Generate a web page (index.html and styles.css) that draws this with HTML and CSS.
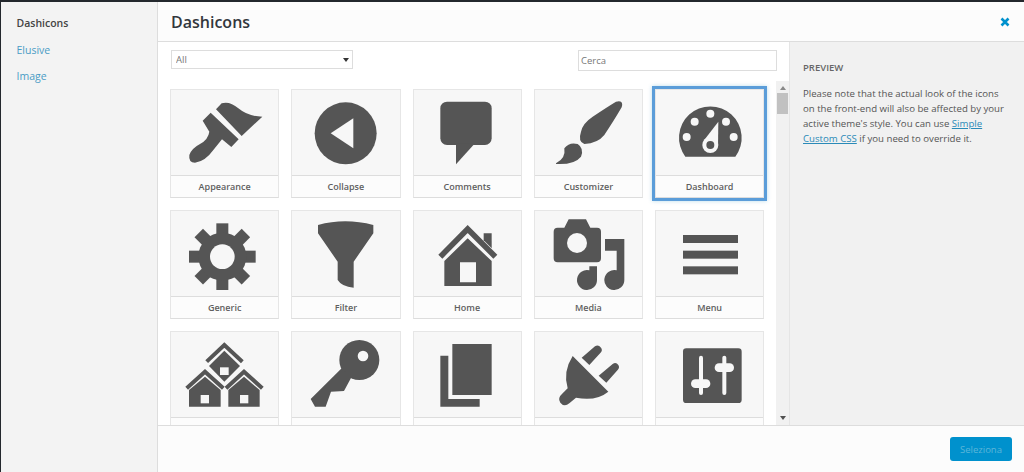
FILE: index.html
```html
<!DOCTYPE html>
<html lang="en">
<head>
<meta charset="UTF-8">
<meta name="viewport" content="width=device-width, initial-scale=1.0">
<title>Dashicons</title>
<link rel="stylesheet" href="styles.css">
</head>
<body>
<div class="modal">
    <div class="sidebar">
        <a href="#" class="tab active">Dashicons</a>
        <a href="#" class="tab">Elusive</a>
        <a href="#" class="tab">Image</a>
    </div>
    <div class="main">
        <div class="header">
            <h1>Dashicons</h1>
            <svg class="close" viewBox="0 0 10 10" width="10" height="10"><path d="M1.5 1.5L8.5 8.5M8.5 1.5L1.5 8.5"/></svg>
        </div>
        <div class="content">
            <div class="browser">
                <div class="toolbar">
                    <div class="filter-wrap">
                        <select class="filter"><option>All</option></select>
                    </div>
                    <input type="text" class="search" placeholder="Cerca">
                </div>
                <div class="grid-wrap">
                    <div class="grid">

                        <div class="tile">
                            <div class="tile-icon"><svg viewBox="513 270 321 255">
                                <path d="M648 328L665 310Q690 303 715 325Q745 350 787 350L725 408Z"/>
                                <path d="M632 338L716 418L694 441L666 418L640 450Q615 485 585 488Q565 488 568 465Q575 445 600 432Q625 418 628 395L608 362Z"/>
                            </svg></div>
                            <div class="tile-label">Appearance</div>
                        </div>

                        <div class="tile">
                            <div class="tile-icon"><svg viewBox="876 270 321 255">
                                <circle cx="1037" cy="400" r="93"/>
                                <path class="cut" d="M992 400L1060 355V445Z"/>
                            </svg></div>
                            <div class="tile-label">Collapse</div>
                        </div>

                        <div class="tile">
                            <div class="tile-icon"><svg viewBox="39 270 321 255">
                                <rect x="118" y="305" width="154" height="130" rx="20"/>
                                <path d="M165 430V493L222 430Z"/>
                            </svg></div>
                            <div class="tile-label">Comments</div>
                        </div>

                        <div class="tile">
                            <div class="tile-icon"><svg viewBox="402 270 321 255">
                                <path d="M660 305Q666 310 662 322Q640 360 610 405Q590 430 550 432Q530 425 540 395Q545 370 575 350Q620 320 645 305Q655 302 660 305Z"/>
                                <path d="M465 490Q495 475 490 445Q505 425 530 432Q550 445 540 470Q520 495 465 492Z"/>
                            </svg></div>
                            <div class="tile-label">Customizer</div>
                        </div>

                        <div class="tile selected">
                            <div class="tile-icon"><svg viewBox="765 270 321 255">
                                <path d="M853 470A94 94 0 1 1 1003 470Z"/>
                                <circle class="cut" cx="928" cy="341" r="12"/>
                                <circle class="cut" cx="881" cy="365" r="12"/>
                                <circle class="cut" cx="975" cy="365" r="12"/>
                                <circle class="cut" cx="857" cy="411" r="12"/>
                                <circle class="cut" cx="998" cy="411" r="12"/>
                                <path class="cut" d="M952 365L951 440L908 422Z"/>
                                <circle class="cut" cx="928" cy="435" r="24"/>
                                <circle cx="928" cy="435" r="12"/>
                            </svg></div>
                            <div class="tile-label">Dashboard</div>
                        </div>

                        <div class="tile">
                            <div class="tile-icon"><svg viewBox="33 18 321 255">
                                <rect x="169" y="55" width="36" height="200"/>
                                <rect x="169" y="55" width="36" height="200" transform="rotate(45 187 155)"/>
                                <rect x="169" y="55" width="36" height="200" transform="rotate(90 187 155)"/>
                                <rect x="169" y="55" width="36" height="200" transform="rotate(135 187 155)"/>
                                <circle cx="187" cy="155" r="72"/>
                                <circle class="cut" cx="187" cy="155" r="37"/>
                            </svg></div>
                            <div class="tile-label">Generic</div>
                        </div>

                        <div class="tile">
                            <div class="tile-icon"><svg viewBox="396 18 321 255">
                                <path d="M474 60Q555 38 640 60V85L581 170V248Q545 245 533 225V170L474 85Z"/>
                            </svg></div>
                            <div class="tile-label">Filter</div>
                        </div>

                        <div class="tile">
                            <div class="tile-icon"><svg viewBox="759 18 321 255">
                                <path d="M968 85H992V130L968 106Z"/>
                                <path class="line" stroke-width="17" d="M838 155L920 72L1003 155"/>
                                <path fill-rule="evenodd" d="M850 243V168L920 100L992 168V243ZM897 172V232H945V172Z"/>
                            </svg></div>
                            <div class="tile-label">Home</div>
                        </div>

                        <div class="tile">
                            <div class="tile-icon"><svg viewBox="42 18 321 255">
                                <path d="M98 80Q98 68 110 68H130L143 43H195L208 68H228Q240 68 240 80V160Q240 172 228 172H110Q98 172 98 160Z"/>
                                <circle class="cut" cx="168" cy="114" r="30"/>
                                <path d="M252 102H310V225A30 30 0 1 1 287 196V137H252Z"/>
                                <path d="M228 184V225A30 30 0 1 1 205 196V184Z"/>
                            </svg></div>
                            <div class="tile-label">Media</div>
                        </div>

                        <div class="tile">
                            <div class="tile-icon"><svg viewBox="405 18 321 255">
                                <rect x="486" y="90" width="165" height="24"/>
                                <rect x="486" y="137" width="165" height="24"/>
                                <rect x="486" y="184" width="165" height="24"/>
                            </svg></div>
                            <div class="tile-label">Menu</div>
                        </div>

                        <div class="tile">
                            <div class="tile-icon"><svg viewBox="33 381 321 255">
                                <path class="line" stroke-width="12" d="M140 470L193 420L247 470"/>
                                <path d="M193 437L240 483L193 530L147 483Z"/>
                                <rect class="cut" x="180" y="487" width="26" height="23"/>
                                <path class="line" stroke-width="12" d="M80 550L135 500L190 550"/>
                                <path d="M87 605V555L135 515L182 555V605Z"/>
                                <rect class="cut" x="122" y="570" width="25" height="25"/>
                                <path class="line" stroke-width="12" d="M198 550L252 500L307 550"/>
                                <path d="M205 605V555L252 515L299 555V605Z"/>
                                <rect class="cut" x="240" y="570" width="25" height="25"/>
                            </svg></div>
                            <div class="tile-label"></div>
                        </div>

                        <div class="tile">
                            <div class="tile-icon"><svg viewBox="396 381 321 255">
                                <circle cx="598" cy="465" r="60"/>
                                <path d="M545 490L452 582L465 605H497L513 560L552 558L575 515Z"/>
                                <circle class="cut" cx="609" cy="453" r="16"/>
                            </svg></div>
                            <div class="tile-label"></div>
                        </div>

                        <div class="tile">
                            <div class="tile-icon"><svg viewBox="759 381 321 255">
                                <rect x="874" y="417" width="118" height="153"/>
                                <path d="M838 452H862V582H956V605H838Z"/>
                            </svg></div>
                            <div class="tile-label"></div>
                        </div>

                        <div class="tile">
                            <div class="tile-icon"><svg viewBox="42 381 321 255">
                                <path d="M155 453L262 560Q225 590 165 578L145 595Q130 608 118 593Q108 580 125 565L140 550Q125 500 155 453Z"/>
                                <path d="M182 458L222 424Q232 418 240 428Q246 436 238 444L205 480Z"/>
                                <path d="M233 512L275 477Q285 470 292 480Q297 488 290 495L256 533Z"/>
                            </svg></div>
                            <div class="tile-label"></div>
                        </div>

                        <div class="tile">
                            <div class="tile-icon"><svg viewBox="405 381 321 255">
                                <rect x="486" y="430" width="176" height="164" rx="10"/>
                                <rect class="cut" x="534" y="452" width="12" height="118" rx="6"/>
                                <rect class="cut" x="604" y="452" width="12" height="118" rx="6"/>
                                <rect class="cut" x="510" y="523" width="58" height="26" rx="13"/>
                                <rect class="cut" x="581" y="475" width="58" height="26" rx="13"/>
                            </svg></div>
                            <div class="tile-label"></div>
                        </div>

                    </div>
                    <div class="scrollbar">
                        <span class="arrow-up"></span>
                        <div class="thumb"></div>
                        <span class="arrow-down"></span>
                    </div>
                </div>
            </div>
            <div class="preview">
                <h3>PREVIEW</h3>
                <p>Please note that the actual look of the icons on the front-end will also be affected by your active theme's style. You can use <a href="#">Simple</a> <a href="#">Custom CSS</a> if you need to override it.</p>
            </div>
        </div>
        <div class="footer">
            <button class="select-btn">Seleziona</button>
        </div>
    </div>
</div>
</body>
</html>
```

FILE: styles.css
```css
* {
    box-sizing: border-box;
}
html, body {
    margin: 0;
    height: 100%;
    overflow: hidden;
}
body {
    font-family: "Open Sans", "Noto Sans", sans-serif;
    background: #23282d;
    padding: 2px 0 0 1px;
    color: #555;
}
.modal {
    display: flex;
    height: 100%;
}
.sidebar {
    width: 157px;
    flex-shrink: 0;
    display: flex;
    flex-direction: column;
    gap: 10.7px;
    padding: 13px 15.5px;
    background: #f3f3f3;
    border-right: 1px solid #ddd;
}
.tab {
    font-size: 10.5px;
    line-height: 16px;
    color: #4a9cc5;
    text-decoration: none;
}
.tab.active {
    color: #444;
    font-weight: 600;
}
.main {
    flex: 1;
    display: flex;
    flex-direction: column;
    min-width: 0;
    background: #fff;
}
.header {
    height: 40px;
    flex-shrink: 0;
    display: flex;
    align-items: center;
    justify-content: space-between;
    padding: 0 14px 0 13px;
    background: #fcfcfc;
    border-bottom: 1px solid #ddd;
}
.header h1 {
    margin: 0;
    font-size: 16px;
    font-weight: 600;
    color: #32373c;
}
.close {
    fill: none;
    stroke: #0091cd;
    stroke-width: 2.6;
}
.content {
    flex: 1;
    display: flex;
    min-height: 0;
}
.browser {
    flex: 1;
    display: flex;
    flex-direction: column;
    min-width: 0;
}
.toolbar {
    height: 39px;
    flex-shrink: 0;
    display: flex;
    justify-content: space-between;
    align-items: flex-start;
    padding: 8px 12px 0 13px;
}
.filter-wrap {
    position: relative;
    width: 182px;
    height: 19px;
}
.filter-wrap::after {
    content: "";
    position: absolute;
    right: 4px;
    top: 8px;
    border-left: 3px solid transparent;
    border-right: 3px solid transparent;
    border-top: 4px solid #333;
}
.filter {
    appearance: none;
    display: block;
    width: 100%;
    height: 100%;
    padding: 0 4px;
    font-family: inherit;
    font-size: 9.5px;
    color: #777;
    background: #fff;
    border: 1px solid #ddd;
    border-radius: 0;
}
.search {
    width: 199px;
    height: 21px;
    padding: 0 2px;
    font-family: inherit;
    font-size: 9.5px;
    border: 1px solid #ddd;
    outline: none;
}
.search::placeholder {
    color: #777;
}
.grid-wrap {
    flex: 1;
    display: flex;
    min-height: 0;
}
.grid {
    flex: 1;
    display: grid;
    grid-template-columns: repeat(5, 109.25px);
    grid-auto-rows: 109px;
    gap: 12px;
    align-content: start;
    padding: 8px 0 0 12px;
    overflow: hidden;
}
.tile {
    display: flex;
    flex-direction: column;
    background: #f7f7f7;
    border: 1px solid #e6e6e6;
    border-bottom-color: #ddd;
}
.tile.selected {
    outline: 3px solid #5b9dd9;
    box-shadow: 0 0 4px 3px rgba(30, 140, 190, 0.3);
}
.tile-icon {
    height: 85px;
    flex-shrink: 0;
}
.tile-icon svg {
    display: block;
    width: 107px;
    height: 85px;
    fill: #555;
}
.tile-icon .cut {
    fill: #f7f7f7;
}
.tile-icon .line {
    fill: none;
    stroke: #555;
}
.tile-label {
    flex: 1;
    display: flex;
    align-items: center;
    justify-content: center;
    font-size: 9px;
    font-weight: 600;
    color: #5f5f5f;
    background: #fcfcfc;
    border-top: 1px solid #ddd;
}
.scrollbar {
    width: 13px;
    flex-shrink: 0;
    display: flex;
    flex-direction: column;
    align-items: center;
    background: #f1f1f1;
}
.thumb {
    width: 11px;
    height: 21px;
    margin-top: 3px;
    background: #c1c1c1;
}
.arrow-up, .arrow-down {
    width: 0;
    height: 0;
    border-left: 3.5px solid transparent;
    border-right: 3.5px solid transparent;
}
.arrow-up {
    margin-top: 5px;
    border-bottom: 4px solid #888;
}
.arrow-down {
    margin-top: auto;
    margin-bottom: 5px;
    border-top: 4px solid #505050;
}
.preview {
    width: 235px;
    flex-shrink: 0;
    padding: 18px 13px 0;
    background: #f1f1f1;
    border-left: 1px solid #e5e5e5;
    font-size: 9.65px;
    line-height: 15px;
}
.preview h3 {
    margin: 0 0 11px;
    font-size: 9.5px;
    font-weight: 600;
    line-height: 15px;
    color: #666;
}
.preview p {
    margin: 0;
}
.preview a {
    color: #2a8ab8;
}
.footer {
    height: 47px;
    flex-shrink: 0;
    display: flex;
    justify-content: flex-end;
    align-items: center;
    padding-right: 12px;
    background: #fcfcfc;
    border-top: 1px solid #ddd;
}
.select-btn {
    width: 62px;
    height: 24px;
    padding: 0;
    font-family: inherit;
    font-size: 9.5px;
    color: #5cb6d9;
    background: #0091cd;
    border: none;
    border-radius: 3px;
}
```
